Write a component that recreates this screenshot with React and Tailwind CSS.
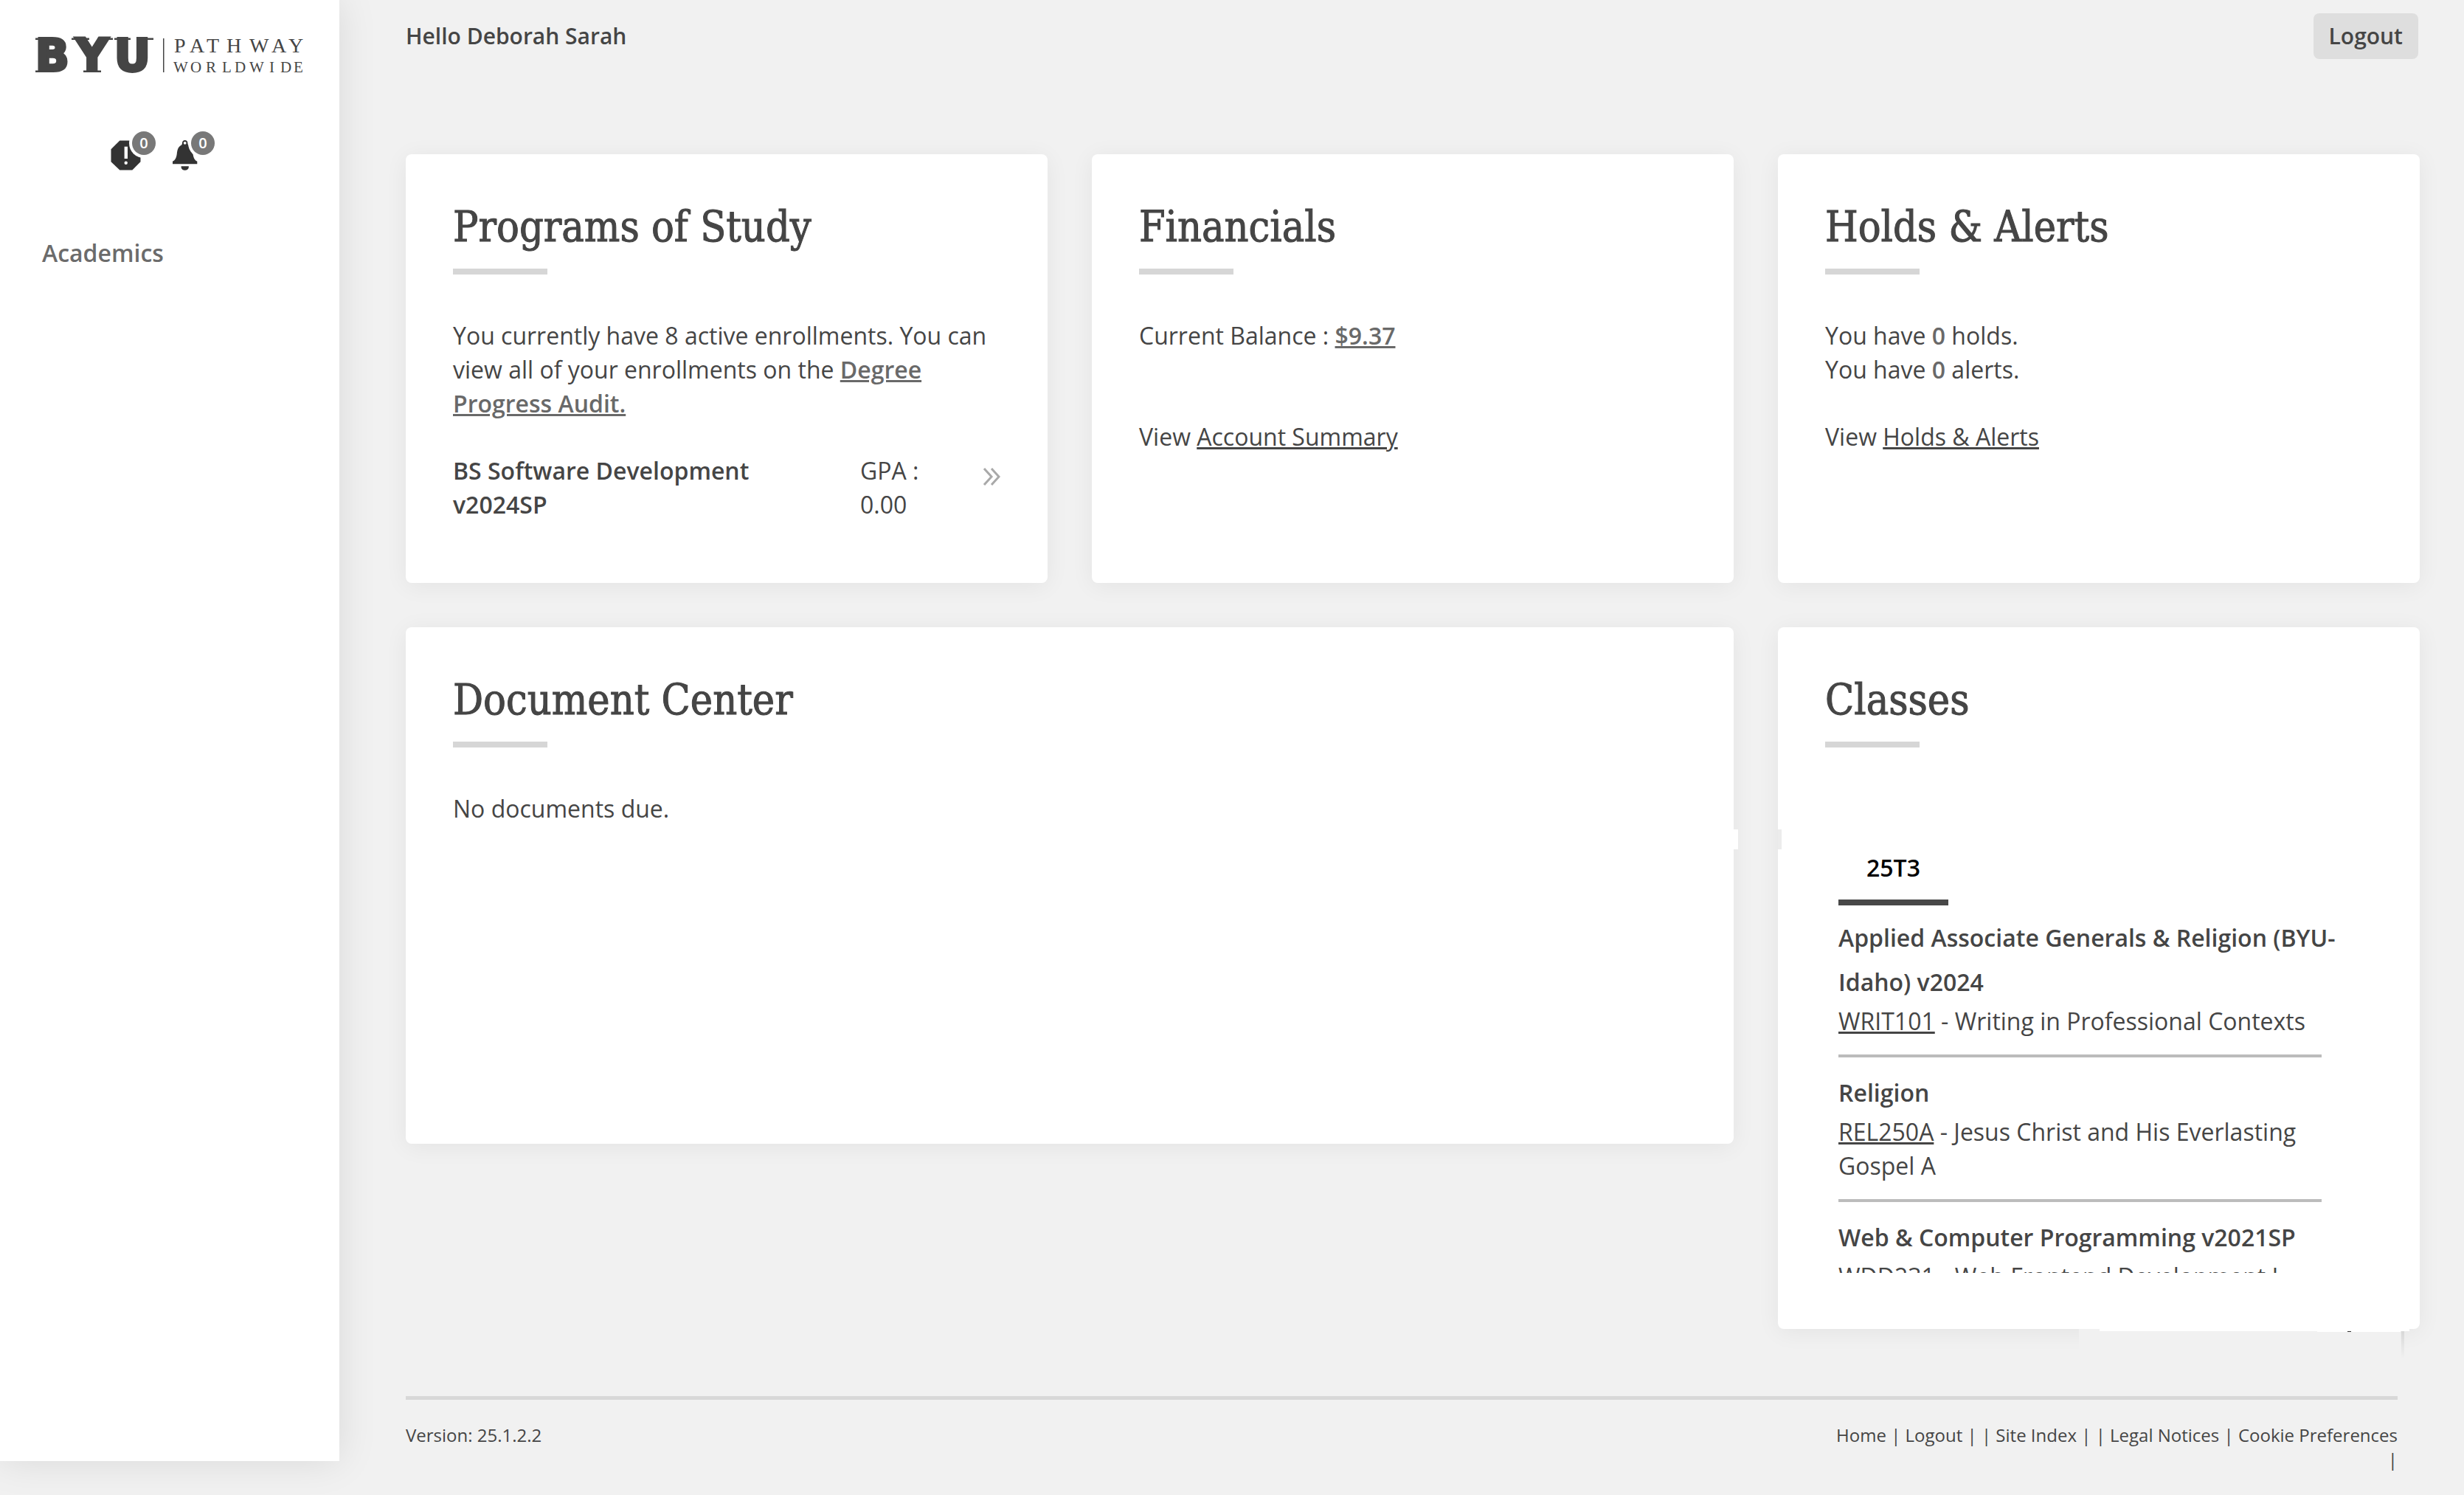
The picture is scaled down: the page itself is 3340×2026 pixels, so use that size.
const COURSES = [
  {
    program: "Applied Associate Generals & Religion (BYU-Idaho) v2024",
    code: "WRIT101",
    name: "Writing in Professional Contexts",
  },
  {
    program: "Religion",
    code: "REL250A",
    name: "Jesus Christ and His Everlasting Gospel A",
  },
  {
    program: "Web & Computer Programming v2021SP",
    code: "WDD231",
    name: "Web Frontend Development I",
  },
];

function Logo() {
  return (
    <svg viewBox="40 32 384 88" className="h-[88px] w-96" fill="#454545" role="img" aria-label="BYU Pathway Worldwide">
      <g fontFamily='"DejaVu Sans", sans-serif' fontWeight="700" fontSize="60" stroke="#454545" strokeWidth="4">
        <text x="48" y="96">B</text>
        <text x="103" y="96">Y</text>
        <text x="155" y="96">U</text>
      </g>
      {/* slab serifs of the wordmark */}
      <path d="M48 51.5h24v2.5H48zM48 95.5h24V98H48zM97 51.5h24v2.5H97zM132 51.5h21v2.5h-21zM113 95.5h24V98h-24zM155 51.5h22v2.5h-22zM188 51.5h20v2.5h-20z" />
      <path d="M221 52h1.5v46H221z" />
      <g fontFamily='"Liberation Serif", serif'>
        <text fontSize="28" y="71" x="236 257 280 307 338 368 391">PATHWAY</text>
        <text fontSize="21" y="98" x="235 258 279 301 318 338 365 380 398">WORLDWIDE</text>
      </g>
    </svg>
  );
}

function CountBadge({ children }) {
  return (
    <span className="absolute -top-3 left-[29px] flex size-8 items-center justify-center rounded-full bg-[#787878] text-xl leading-8 font-semibold text-white ring-4 ring-white">
      {children}
    </span>
  );
}

function StatusIcons() {
  return (
    <div className="mt-[70px] flex gap-10 pl-[150px]">
      <button type="button" aria-label="Holds" className="relative size-10">
        <svg viewBox="0 0 40 40" className="size-10 overflow-visible">
          <path d="M12.3.4h17l11.2 11.9v17L29.3 40.500h-17L.5 29.300v-17z" fill="#333" />
          <path d="M18.600 8.700h4.400V25h-4.400z" fill="#fff" />
          <circle cx="20.700" cy="30.700" r="2.200" fill="#fff" />
        </svg>
        <CountBadge>0</CountBadge>
      </button>
      <button type="button" aria-label="Alerts" className="relative size-10">
        <svg viewBox="0 0 40 40" className="size-10 overflow-visible" fill="#333">
          <path
            fillRule="evenodd"
            d="M20.700 0c2.200 0 3.700 1.700 3.700 3.700 0 1 .2 2.300 1.200 3 4.700 2.600 5.300 7 5.900 11.500.7 5.600 2.200 8.600 5.800 10.600v3.500H4v-3.500c3.600-2 5.100-5 5.800-10.600.6-4.500 1.200-8.900 5.900-11.500 1-.7 1.300-2 1.300-3C17 1.700 18.500 0 20.700 0zm0 1.900a1.900 1.900 0 1 0 0 3.800 1.900 1.900 0 0 0 0-3.800z"
          />
          <path d="M15.600 35.300h10.200v1.200a5.100 4.300 0 0 1-10.200 0z" />
        </svg>
        <CountBadge>0</CountBadge>
      </button>
    </div>
  );
}

function Sidebar() {
  return (
    <aside className="h-[calc(100vh-46px)] w-[460px] shrink-0 bg-white pt-8 shadow-[0_0_50px_rgba(0,0,0,0.1)]">
      <a href="#home" className="block pl-10">
        <Logo />
      </a>
      <StatusIcons />
      <nav className="mt-[90px] pl-[57px]">
        <a href="#academics" className="font-semibold text-[#6b6b6b]">
          Academics
        </a>
      </nav>
    </aside>
  );
}

function Card({ title, className = "", children }) {
  return (
    <section
      className={`relative rounded-lg bg-white px-16 pt-[58px] shadow-[0_4px_32px_rgba(0,0,0,0.06)] ${className}`}
    >
      <h2 className='font-["DejaVu_Serif_Condensed","DejaVu_Serif",serif] text-[57px] leading-[80px] [-webkit-text-stroke:1px_#454545]'>
        {title}
      </h2>
      <div className="mt-[17px] h-2 w-32 bg-[#d6d6d6]" />
      {children}
    </section>
  );
}

function BoldLink({ href, children }) {
  return (
    <a href={href} className="font-semibold text-[#696969] underline">
      {children}
    </a>
  );
}

function Classes() {
  return (
    <Card title="Classes" className="pb-[76px]">
      <div className="mt-[140px] ml-[18px]">
        <button type="button" className="border-b-8 border-[#484848] px-[38px] pb-5 font-semibold text-black">
          25T3
        </button>
        <div className="mt-[14px] h-[484px] overflow-hidden">
          {COURSES.map((c) => (
            <div key={c.code} className="mb-[18px]">
              <h3 className="leading-[60px] font-semibold">{c.program}</h3>
              <p className="mr-[69px] border-b-4 border-[#bcbcbc] pb-[22px]">
                <a href="#course" className="underline">
                  {c.code}
                </a>{" "}
                - {c.name}
              </p>
            </div>
          ))}
        </div>
      </div>
      <div className="absolute top-[274px] left-0 h-[27px] w-[5px] bg-[#ececec]" />
      <div className="absolute right-[26px] -bottom-10 h-10 w-[436px] bg-[#f1f1f1]" />
      <div className="absolute right-[14px] -bottom-[3px] h-[3px] w-[420px] bg-white" />
      <div className="absolute right-[26px] -bottom-1 h-1 w-[113px] bg-white" />
      <div className="absolute right-[93px] -bottom-1 h-px w-[5px] bg-[#333]" />
      <div className="absolute right-[21px] -bottom-10 h-[37px] w-1 bg-linear-to-b from-[#d8d8d8] to-[#f1f1f1]" />
    </Card>
  );
}

export default function App() {
  return (
    <div className='flex min-h-screen bg-[#f1f1f1] font-["Open_Sans",sans-serif] text-[32px] leading-[46px] text-[#454545]'>
      <Sidebar />
      <main className="flex-1 pr-[60px] pl-[90px]">
        <header className="flex items-center justify-between pt-[18px] pr-[2px] text-[30px] font-semibold">
          <span>Hello Deborah Sarah</span>
          <button type="button" className="rounded-lg bg-[#dedede] px-[21px] py-2">
            Logout
          </button>
        </header>

        <div className="mt-[129px] grid grid-cols-3 items-start gap-[60px]">
          <Card title="Programs of Study" className="min-h-[581px]">
            <p className="mt-[60px]">
              You currently have 8 active enrollments. You can view all of your enrollments on the{" "}
              <BoldLink href="#audit">Degree Progress Audit.</BoldLink>
            </p>
            <div className="mt-[45px] flex">
              <div className="flex-1 pr-12 font-semibold">BS Software Development v2024SP</div>
              <div className="w-[120px]">GPA : 0.00</div>
              <a href="#program" aria-label="Open program" className="mt-[19px] ml-[46px]">
                <svg viewBox="0 0 24 24" className="size-6" fill="none" stroke="#a9a9a9" strokeWidth="3">
                  <path d="M2 1l10 11L2 23M12 1l10 11-10 11" />
                </svg>
              </a>
            </div>
          </Card>

          <Card title="Financials" className="min-h-[581px]">
            <p className="mt-[60px]">
              Current Balance : <BoldLink href="#balance">$9.37</BoldLink>
            </p>
            <p className="mt-[91px]">
              View{" "}
              <a href="#summary" className="underline">
                Account Summary
              </a>
            </p>
          </Card>

          <Card title="Holds & Alerts" className="min-h-[581px]">
            <p className="mt-[60px]">
              You have <b className="font-semibold text-[#696969]">0</b> holds.
            </p>
            <p>
              You have <b className="font-semibold text-[#696969]">0</b> alerts.
            </p>
            <p className="mt-[45px]">
              View{" "}
              <a href="#holds" className="underline">
                Holds &amp; Alerts
              </a>
            </p>
          </Card>

          <Card title="Document Center" className="col-span-2 min-h-[700px]">
            <p className="mt-[60px]">No documents due.</p>
            <div className="absolute top-[274px] -right-[6px] h-[27px] w-[6px] bg-white" />
          </Card>

          <Classes />
        </div>

        <footer className="mt-[91px] mr-[30px] flex justify-between border-t-[5px] border-[#d8d8d8] pt-[31px] text-2xl leading-[33px]">
          <span>Version: 25.1.2.2</span>
          <div className="w-[766px] text-right">
            <a href="#home">Home</a> | <a href="#logout">Logout</a> | | <a href="#index">Site Index</a> | |{" "}
            <a href="#legal">Legal Notices</a> | <a href="#cookies">Cookie Preferences</a> |
          </div>
        </footer>
      </main>
    </div>
  );
}
